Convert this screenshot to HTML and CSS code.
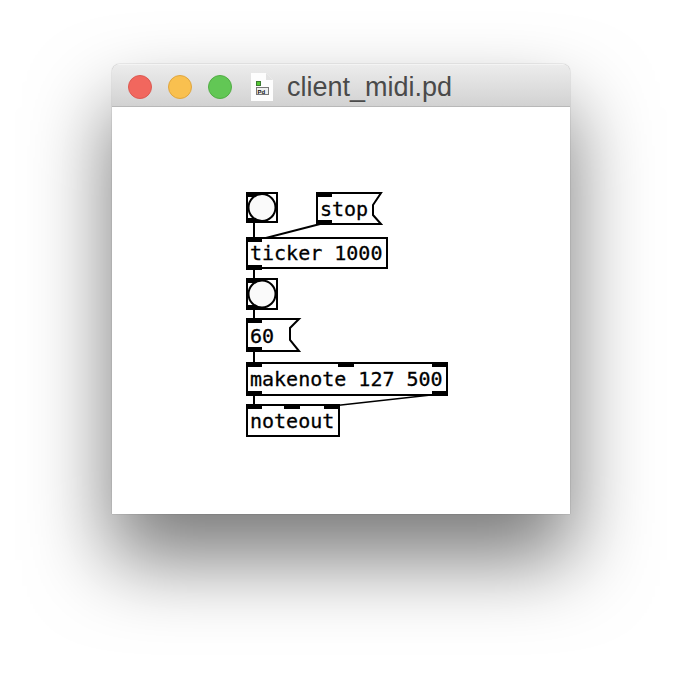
FILE: index.html
```html
<!DOCTYPE html>
<html lang="en">
<head>
  <meta charset="UTF-8">
  <title>client_midi.pd</title>
  <link rel="stylesheet" href="styles.css">
</head>
<body>
  <div class="window">
    <div class="titlebar">
      <span class="light red"></span>
      <span class="light yellow"></span>
      <span class="light green"></span>
      <svg class="file-icon" width="22" height="28" viewBox="0 0 22 28">
        <path d="M0 0H15L22 7V28H0Z" fill="#fdfdfd"/>
        <path d="M15 0V7H22Z" fill="#e2e2e2"/>
        <rect x="5.500" y="8.500" width="4" height="4" fill="#55c733" stroke="#3a7a30"/>
        <rect x="5.500" y="14.500" width="12" height="7" fill="#efefef" stroke="#777"/>
        <text class="file-icon-text" x="6.500" y="20.500">Pd</text>
      </svg>
      <span class="title">client_midi.pd</span>
    </div>
    <div class="canvas">
      <!-- patch coords are page coords, viewBox starts at window origin -->
      <svg class="patch" width="458" height="407" viewBox="112 107 458 407">
        <g class="wires">
          <path d="M254 222V238"/>
          <path d="M324 223L254 241"/>
          <path d="M254 268V280"/>
          <path d="M254 308V320"/>
          <path d="M254 350V364"/>
          <path d="M254 394V406"/>
          <path class="thin" d="M440 394L332 406"/>
        </g>

        <rect class="box" x="247" y="193" width="30" height="29"/>
        <rect class="port" x="246" y="192" width="16" height="5"/>
        <rect class="port" x="246" y="218" width="16" height="5"/>
        <circle class="bang" cx="262" cy="207.500" r="13.500"/>

        <path class="box" d="M317 193H381L373 205V215L381 224H317Z"/>
        <rect class="port" x="316" y="192" width="16" height="5"/>
        <rect class="port" x="316" y="220" width="16" height="5"/>
        <text class="label" x="320" y="216">stop</text>

        <rect class="box" x="247" y="238" width="140" height="30"/>
        <rect class="port" x="246" y="237" width="16" height="5"/>
        <rect class="port" x="246" y="265" width="16" height="5"/>
        <text class="label" x="250" y="260">ticker 1000</text>

        <rect class="box" x="247" y="279" width="30" height="30"/>
        <rect class="port" x="246" y="278" width="16" height="5"/>
        <rect class="port" x="246" y="305" width="16" height="5"/>
        <circle class="bang" cx="262" cy="294" r="13.500"/>

        <path class="box" d="M247 319H299L290 328V340L299 351H247Z"/>
        <rect class="port" x="246" y="318" width="16" height="5"/>
        <rect class="port" x="246" y="347" width="16" height="5"/>
        <text class="label" x="250" y="343">60</text>

        <rect class="box" x="247" y="363" width="200" height="32"/>
        <rect class="port" x="246" y="362" width="16" height="5"/>
        <rect class="port" x="338" y="362" width="16" height="5"/>
        <rect class="port" x="432" y="362" width="16" height="5"/>
        <rect class="port" x="246" y="391" width="16" height="5"/>
        <rect class="port" x="432" y="391" width="16" height="5"/>
        <text class="label" x="250" y="386">makenote 127 500</text>

        <rect class="box" x="247" y="405" width="92" height="31"/>
        <rect class="port" x="246" y="404" width="16" height="5"/>
        <rect class="port" x="284" y="404" width="16" height="5"/>
        <rect class="port" x="324" y="404" width="16" height="5"/>
        <text class="label" x="250" y="428">noteout</text>
      </svg>
    </div>
  </div>
</body>
</html>
```

FILE: styles.css
```css
html, body {
  margin: 0;
  height: 100%;
  background: #fff;
  overflow: hidden;
}
.window {
  width: 458px;
  height: 450px;
  margin: 64px 0 0 112px;
  border-radius: 8px 8px 0 0;
  background: #fff;
  box-shadow: 0 0 1px rgba(0, 0, 0, 0.6), 0 44px 80px 2px rgba(0, 0, 0, 0.52);
  overflow: hidden;
}
.titlebar {
  display: flex;
  align-items: center;
  height: 43px;
  box-sizing: border-box;
  padding: 2px 0 0 16px;
  background: linear-gradient(#ececec, #d2d2d2);
  border-top: 1px solid #f4f4f4;
  border-bottom: 1px solid #b8b8b8;
}
.light {
  width: 24px;
  height: 24px;
  box-sizing: border-box;
  border-radius: 50%;
  margin-right: 16px;
  border: 1px solid transparent;
}
.red {
  background: #f1675e;
  border-color: #dc5a52;
}
.yellow {
  background: #f9c04f;
  border-color: #e0a63f;
}
.green {
  background: #62c755;
  border-color: #52ad45;
}
.file-icon {
  margin-left: 3px;
  margin-right: 14px;
}
.file-icon-text {
  font-family: "Liberation Sans", sans-serif;
  font-size: 6px;
  font-weight: bold;
  fill: #111;
}
.title {
  font-family: "Liberation Sans", Arial, sans-serif;
  font-size: 27px;
  color: #4a4a4a;
  position: relative;
  top: 1px;
}
.canvas {
  height: 407px;
  background: #fff;
}
.patch {
  display: block;
}
.wires path {
  fill: none;
  stroke: #000;
  stroke-width: 2;
}
.wires .thin {
  stroke-width: 1.500;
}
.box {
  fill: #fff;
  stroke: #000;
  stroke-width: 2;
}
.bang {
  fill: #fafafa;
  stroke: #000;
  stroke-width: 2;
}
.port {
  fill: #000;
}
.label {
  font-family: "DejaVu Sans Mono", monospace;
  font-size: 20px;
  fill: #000;
  stroke: #000;
  stroke-width: 0.300;
}
```
